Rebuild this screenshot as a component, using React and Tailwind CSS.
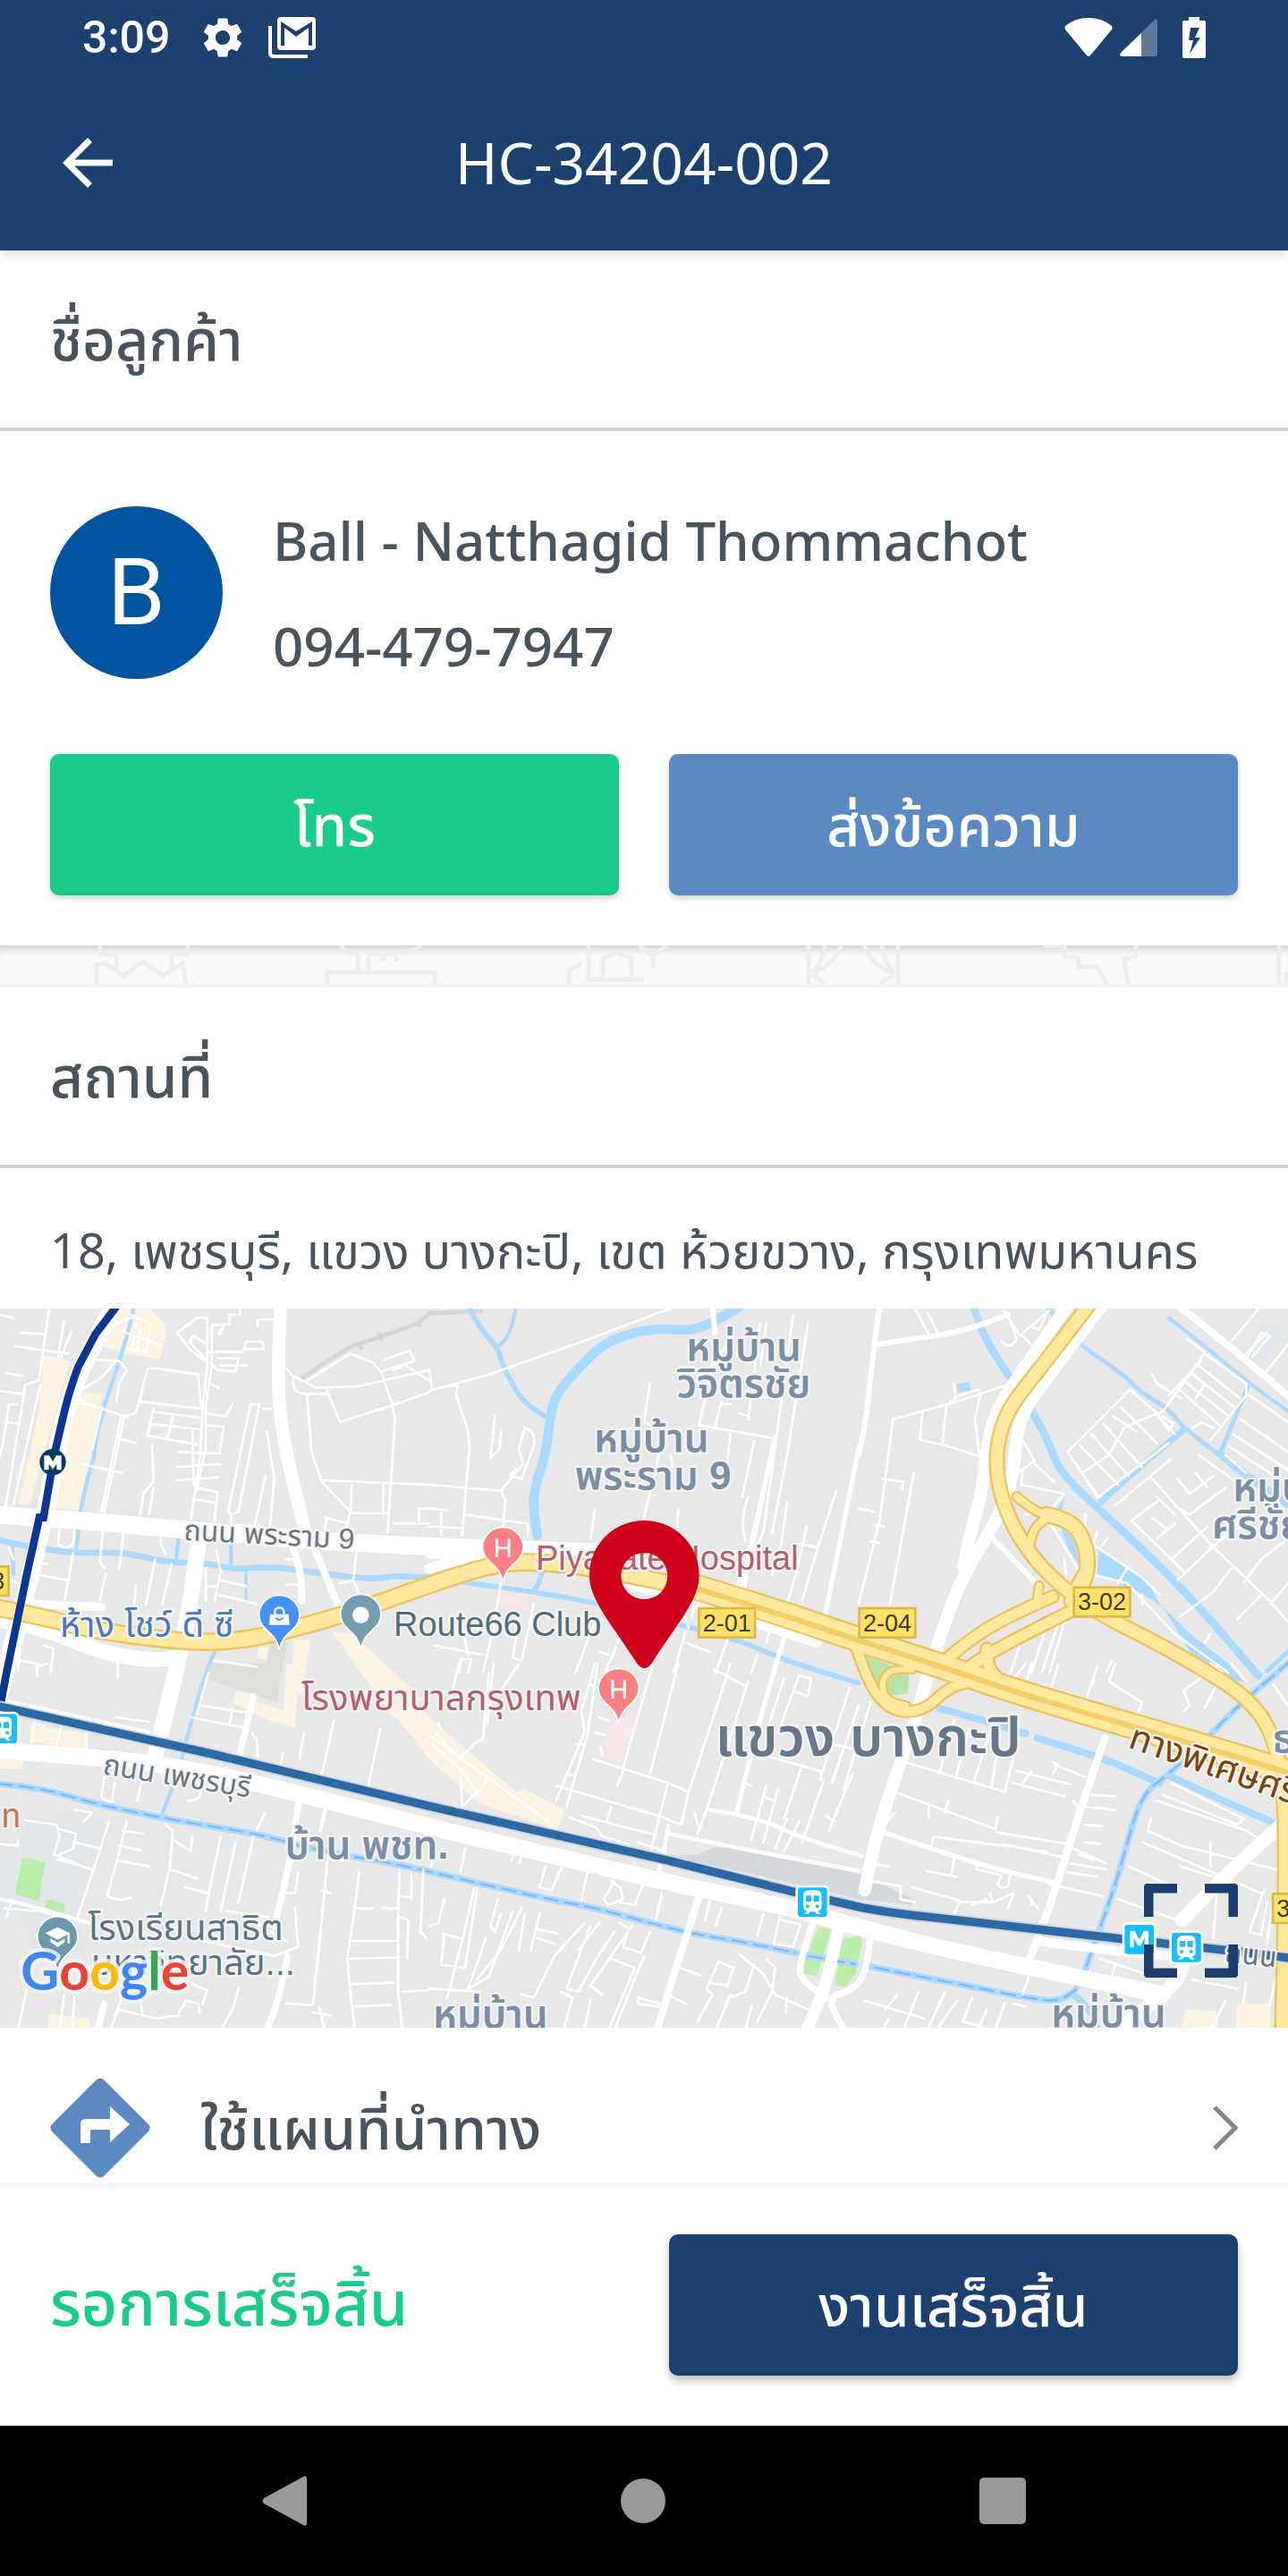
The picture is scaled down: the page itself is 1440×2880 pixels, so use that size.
import React from "react";
import { MdArrowBack, MdSettings } from "react-icons/md";

// Origin of every map tile, in map units (3 units = 1 px on a 1440 wide screen)
const tiles = {
  a: [0, -9],
  b: [1440, -9],
  c: [2880, -9],
  d: [0, 1191],
  e: [1440, 1191],
  f: [2880, 1191],
};

const areas = [
  { tile: "a", fill: "#fcf3e0", d: "M145 165L235 185L170 420L100 665L62 665L130 350ZM400 10H500L555 60V110L535 180L420 160L345 135ZM245 330L335 345L300 520L265 685L178 680L215 480ZM265 285L345 300L335 330L245 315ZM1110 1090L1180 1100L1420 1320L1320 1380ZM985 1120H1040L1015 1300H975ZM865 1145H900L895 1190L865 1180Z" },
  { tile: "d", fill: "#fcf3e0", d: "M100 205L290 235L285 290L100 260ZM0 315L80 325L75 355L0 350ZM790 95H850L840 120L990 170V215L900 190L780 130ZM960 0H1010L990 190L950 160ZM1190 0H1275L1440 180V320ZM165 1175L300 1190V1230H160Z" },
  { tile: "e", fill: "#fcf3e0", d: "M0 180L290 430L320 420L452 490L430 558L170 470L0 320Z" },
  { tile: "f", fill: "#fcf3e0", d: "M1270 1140H1380V1230H1265ZM1100 1160L1200 1165L1210 1230H1080Z" },
  { tile: "b", fill: "#f8e7e9", d: "M240 930L335 955L325 1020L225 1000Z" },
  { tile: "e", fill: "#f8e7e9", d: "M610 190L700 160L650 335L575 315Z" },
  { tile: "d", fill: "#e2e7ea", d: "M90 515L310 490L370 560L300 690L260 830L290 960L120 970L60 820L0 860V600L70 590Z" },
  { tile: "c", fill: "#e2e7ea", d: "M1345 60L1400 50L1430 90L1350 190L1290 180Z" },
  { tile: "d", fill: "#dfddd9", d: "M700 0H945L930 130L840 100L690 50Z" },
  { tile: "a", fill: "#dfddd9", d: "M905 1130H965L945 1230H890Z" },
  { tile: "e", fill: "#d5d8da", d: "M800 645L900 640L960 615L1080 620L1440 705L1520 740L1620 790V810L1440 790L1060 700Z" },
  { tile: "d", fill: "#b9eea8", d: "M75 650L152 665L130 795L50 775ZM155 790L218 805L215 835L150 825Z" },
  { tile: "e", fill: "#b9eea8", d: "M1305 885L1348 892L1300 1048L1255 1040L1262 990ZM1385 925L1440 912L1452 930L1430 1040L1395 1085L1360 1075Z" },
  { tile: "f", fill: "#b9e3a8", d: "M0 -40L80 -5L170 25L165 100L100 108L40 70Z" },
  { tile: "c", fill: "#aadaff", d: "M805 820L960 910L1010 1000L1100 1090L1240 1200L1290 1260L1160 1240L1020 1010L950 965L800 900ZM675 735L720 780L745 880L700 810ZM665 680L690 640L680 690ZM330 262L370 255L376 283L335 290ZM1140 1190L1250 1205L1200 1240Z" },
];

const rivers = [
  { tile: "a", w: 13, pts: ["450,0 430,90 395,200 350,335", "350,345 322,430 318,500 290,590 270,690", "265,740 255,825", "600,770 590,860", "775,790 775,880", "40,800 45,900", "720,1160 685,1240 640,1400 600,1560 545,1700"] },
  { tile: "a", w: 8, pts: ["825,880 825,985"] },
  { tile: "a", w: 20, pts: ["-10,785 120,812 250,830 420,826 560,862 700,862 790,885 900,873 1060,895 1240,918 1330,905 1450,912"] },
  { tile: "b", w: 17, pts: ["120,928 350,958 600,1005", "385,870 372,920 350,958", "800,1060 1030,1115 1180,1185 1440,1265", "130,0 165,70 230,140 250,210 310,320 400,378"] },
  { tile: "b", w: 12, pts: ["292,0 275,90 230,140"] },
  { tile: "b", w: 32, pts: ["1060,-10 940,65 860,84 780,74 670,92 580,130 500,210 420,300 402,400 390,500 350,620 350,690 362,770"] },
  { tile: "c", w: 26, pts: ["385,0 410,80 460,170 515,250", "580,350 640,460 670,550 790,670 860,730 1100,960 1340,1240", "1210,495 1300,570 1440,665"] },
  { tile: "c", w: 15, pts: ["630,0 680,60", "745,130 820,185 900,240 940,285 1040,345 1090,410 1210,500", "1310,260 1260,380 1210,500", "1450,1150 1370,1225"] },
  { tile: "c", w: 20, pts: ["1090,415 960,525 810,660"] },
  { tile: "c", w: 12, pts: ["1040,40 1180,150 1310,260 1450,360"] },
  { tile: "f", w: 24, pts: ["270,150 400,185 560,235", "600,250 820,315 960,380 1010,400", "1040,375 1200,450 1395,535", "720,1110 790,1170 800,1240"] },
];

// Canals that carry a boat line, drawn with a dashed line on top
const canals = [
  { tile: "d", w: 22, pts: ["-10,402 130,415 300,465 480,505 700,545 860,570 1100,635 1300,665 1600,735 1840,790 2000,820 2200,875 2320,905 2500,935 2670,970", "2710,980 2870,1008"] },
  { tile: "f", w: 22, pts: ["1450,-10 1320,100 1240,175 1150,270 1040,370 960,430 920,530 880,680 840,800 760,1025", "730,1090 690,1128 620,1130 520,1112 340,1075 180,1045 35,1015"] },
];

const lanes = [
  { tile: "a", d: "M165 10L130 250L85 265L20 670M70 90L150 95M50 135L230 160M0 30L45 40M215 50L195 170M240 85L205 170M20 225L75 235M0 285L75 295M60 330L30 330L10 460L-5 520M20 390L60 395M135 265L45 665M310 180L400 185L425 215L400 260L390 320M385 190L340 240L260 290M250 310L430 375M260 325L340 345L420 370L455 360L470 310L495 210H530L665 230L675 345M465 320L675 345M405 375L340 690M415 380L350 690M340 350L310 480M400 445L455 460M270 530L410 560M445 40L385 60M440 30L505 60L490 155L430 145M405 85L540 130M455 60L445 140M475 60L460 145" },
  { tile: "a", d: "M695 40H660L595 90L635 145L695 190M650 100L635 120L690 180M650 100L695 130M805 10V30H770V60L710 65V150M695 40V200L680 340L670 520L640 715M710 150V200L690 340L690 480L660 620M750 70L735 95M700 155H815L825 120H880L885 145H820M865 65V45H915M705 190L730 215L790 220L800 175H730M740 200H830M700 260L735 275M515 345L495 435L660 465M515 355L670 375M500 395L675 415M580 370L560 450M645 420L650 600M690 360L755 370L780 330M690 400L750 405L735 495M600 490L740 495M595 540L740 530M590 585L735 575M660 610L730 625L720 720M660 650L720 660M510 465L515 590L480 630L470 700M515 610L500 700M765 690L840 330H870L800 690L780 700ZM880 345H910M895 420L920 580L905 740M890 570L855 735M775 700V735H870" },
  { tile: "a", d: "M960 210L985 240Q975 290 1020 295L1090 295M985 235L1060 275L1200 270L1440 215M1030 250L1175 160L1250 190L1280 225L1315 330L1325 380L1300 760M1030 300L1045 490L1080 590L1175 690L1160 745M1095 280L1140 390L1310 335L1440 290M1080 585L1440 600M1180 600L1175 695H1300M1285 600V700M1290 180L1375 150L1390 185L1280 220M1320 215L1360 200L1440 250M1440 680H1405V725M1320 730H1440M1090 710L1170 730M1095 710L1090 750M1195 830L1185 920L1140 930M1185 920L1220 1000M960 850H1000M960 935H1010" },
  { tile: "a", d: "M200 745L195 800Q220 820 245 800L250 745M345 755L335 860L350 880M415 760L400 880M520 850L490 1000M575 865L545 1000M540 770V800L555 830M245 830L215 1000M355 900L335 985M120 900L225 920M115 865H160M0 905L60 930M30 810L45 850M725 820L740 890L720 990M690 880V990M740 920L825 940M735 970L860 1000M690 940H730M455 940L450 1000M70 1130L60 1220M70 1190L130 1200M150 1140L180 1150L170 1230M720 1190L860 1210" },
  { tile: "b", d: "M830 0L540 110L200 230L0 285M65 270L95 265L90 300L130 420L135 470L110 770M220 370L205 510L235 480L240 420M320 410L300 480L315 530L240 620M320 410Q360 420 350 470L310 580L270 570L290 545M0 600L240 620L255 650L245 770M0 680L60 685M40 685V770M120 700L330 730V775M0 740L110 745M0 215L10 280M945 10L960 150L905 400M1000 120L960 200M1110 60L1070 380M1220 30L1170 400L1120 760L1030 940M1270 60L1200 500L1150 760M1130 60L1110 200M905 400L1160 445L1060 940M980 320L960 400M1070 300L1160 310M980 330H1010M1040 360L1070 370M740 260L720 390L760 410M770 500L720 710M810 500L815 540M1010 430L995 560M1090 450L1050 640M555 685L540 780M835 685L830 760M1070 640Q1040 720 1060 790M1200 660L1180 800L1150 900M1265 740L1235 880L1200 1000M1365 620L1300 820L1250 990M1300 810L1240 800" },
  { tile: "b", d: "M240 930L215 1080L180 1230M160 1080L215 1090M350 1000L310 1190L280 1180L300 1050M20 1140L180 1170M110 1080L130 1170M640 1110L590 1230M555 1060L490 1230M570 1160L600 1170M860 1090L820 1230M860 1130L940 1160M1050 940L1110 1000M1150 1060L1130 1130M890 990L880 1050M1000 1120L960 1230M1100 1170L1080 1230M850 1020L870 1080M100 1230L105 1185H140L130 1230" },
  { tile: "c", d: "M190 10L235 95M230 20L265 90M500 30L530 110Q510 150 480 120M490 20L540 100L640 15M550 100L580 130M580 70L605 80L630 30M650 55L670 30M115 380L300 330L500 265M300 330L325 310L320 260M325 305L405 280M115 380L100 500L70 720L0 1000M215 350L205 450L280 465L405 505M295 330L280 465M410 290L390 380L405 500M0 680L50 690M80 580L150 590L145 615M185 560L105 1000M50 735L85 740M40 790L70 795M550 450L590 520L540 555M590 530L655 590M550 550L545 600L690 630L640 690L650 740L740 890L900 930L1060 1100L1240 1230" },
  { tile: "c", d: "M910 280L700 490L805 640L1040 460M910 280L1000 360L1060 430M855 370L930 420M820 395L950 540M780 430L905 570M740 465L870 600M700 490L800 640M750 560L840 500L890 410L940 385L1020 355L1160 160M880 340L1000 460M1000 360L1040 420L1055 395L1020 370M1100 110L1160 155L1145 190L1040 300M985 230L1000 260L1080 310M1160 160L1300 260V300L1180 450M1140 200L1280 310M1115 225L1260 340M1090 250L1240 370M1070 275L1210 400M1160 265L1130 310M1120 410L1150 390L1190 410M1300 180L1350 90L1380 100L1320 170M1240 130L1350 0M1290 170L1370 90M1360 230L1440 130" },
  { tile: "c", d: "M1310 300L1440 390M1280 380L1440 490M1255 430L1440 550M1240 470L1440 600M1230 500L1300 560M860 670L1045 515M915 720L1010 650M980 575L1190 810L1380 990L1440 1060M1140 500L1280 600M1070 580L1110 630L1190 570M1130 560L1170 610M1060 670L1110 700L1230 610M915 720L1090 890M1000 780L1060 730M1050 850L1170 740M1070 920L1280 720M1180 810L1280 740M1190 960L1250 880M1080 1040L1190 960M1270 1050L1350 970M1380 1000L1440 930M1290 930L1350 850L1440 780M1000 640L1060 700M985 710L1035 750M560 700L620 680M760 700V750M800 760L785 800M835 780L810 810M870 930L900 880M770 790L950 910L1010 970M690 850L695 900M950 970V1000M850 1190L830 1230M690 1060L640 1230M670 1060L615 1230M670 1060H695M625 1090L580 1230M540 1140L510 1230M1160 1130L1180 1100" },
  { tile: "d", d: "M125 0V40M395 0V45M390 180L500 195M120 10L160 0M105 265L115 200L150 210M190 270L205 215M290 290V235M700 30L660 170M640 180L820 215M670 140L835 165M780 150L770 200M860 250L865 310M855 250L845 230M1020 230L1005 320M1120 190L1080 370M1275 220L1235 410M950 300L940 340M890 500L860 560M350 380L340 450L375 465L385 400M475 400L460 460M670 420Q680 460 630 460M365 530L330 640L260 850M425 530L395 650L360 780Q400 800 440 785M410 560L480 570M400 610L470 625M395 660L500 680M555 540L580 560L570 680L540 810M580 590L640 630L645 580M570 690L660 720M620 750L700 770L740 580M700 770L690 830M790 600L740 830M850 580L800 800M80 525L190 540L200 580L180 640L280 680M250 490L310 500L280 530M200 555L255 570L245 620L200 640M255 600L335 620M190 655L310 690M0 605L60 610V590M40 800L20 850M15 820L130 830L300 870" },
  { tile: "d", d: "M560 1040L695 1095L680 1140M400 1160L520 1190L600 1180M405 1130L370 1230M470 1130L480 1180M600 1170L625 1130L665 1140L670 1170M800 1090L780 1160L740 1230M90 1090L60 1230M250 1120L240 1230M215 1110L200 1230M860 870L960 930M760 830L900 850M1000 700L990 770H960M990 820L1000 950L920 980L680 930M1100 640L1080 850L1050 1140M1080 760L1110 770M960 1140L1050 1145M1050 1170L1110 1180M1070 1150L1090 1230M1205 700L1190 820L1165 990L1175 1100L1190 1230M1190 820L1250 820M1280 820H1340M1170 930H1335M1165 990L1340 985M1170 1075L1320 1070M1190 1150L1310 1145M1340 690L1335 850V1100L1350 1230M1340 780L1380 785M1340 850L1370 860L1365 990M1380 700V790M1350 1100L1440 1095M1420 690L1410 900L1430 920" },
  { tile: "e", d: "M200 30L180 250L150 270L100 320M30 200L40 220M100 0L80 80M215 0L195 200M300 0L240 90M555 0L510 160L520 230L425 460M565 0L530 240L460 480M490 270H520M460 370L490 375M430 410L800 520M540 70L570 85M570 180L600 190M555 230L590 240M550 320L800 400L740 640M580 310L575 280M655 350L630 410M750 0L650 350M835 0L740 370M800 400L870 430L845 540L790 520M610 480L595 530M470 515L560 550L580 580L670 605M510 510L700 560L760 575M700 600L780 625M955 20L995 40L1060 75M1010 0L985 80L870 430M1070 60L930 490L900 570M890 500L900 540M1240 40L1280 50L1270 110L1230 95M1240 40L1170 230M1190 50L1130 230M1410 80L1310 390M1350 270L1440 290M1130 310L1310 360L1320 400L1250 600M1250 340L1190 520M1420 370L1340 560M1130 410L1080 590M1130 450L1160 460M1170 420L1120 600M1200 520L1160 620M1240 530L1190 630M1330 510L1360 530M1060 400L1080 410M20 230L100 320M10 270L110 360L160 430L110 480L105 380M0 240L400 530M200 380L160 440M800 540L790 640M770 680L780 640" },
  { tile: "e", d: "M150 755L120 890L60 1120M45 905L100 920M50 910L40 1010L120 1020L160 760M0 880L30 870L50 790M230 790L205 880L220 900L240 840M190 920L130 1090L200 1050L280 830M310 820L240 960L160 1060M320 840L300 960M370 840L340 960M360 890L430 905M360 920L420 940M0 1090L170 1100M520 870L420 980L350 1120L310 1110M540 880L460 1090L500 1100L560 990L620 900M570 870L500 960M680 880L540 1080L580 1110M640 870L670 890L650 950L710 970L740 900M610 990L690 1020L600 1230M720 980L620 1230M440 1100L480 1120L450 1230M700 1120L770 1140V1150L700 1140ZM800 1110L860 1140M530 700L510 790M390 680L370 750L410 760L445 680M620 730L585 790L600 810L650 790L640 750L610 730M715 740L690 810L640 800M780 770L760 860M120 620L105 700M20 600L5 680M840 1020L910 1045M970 1000L930 1090L950 1110L900 1200M970 1000L1020 1020L1000 1080L940 1070M1040 975L1120 1040L1160 1110L1270 1160M1090 1010L1060 1100L1010 1120M1130 990L1160 1020L1150 1100L1100 1200M1200 1120L1195 1170M1175 850L1155 940L1220 950L1245 875L1180 860M1120 840L1100 910M980 820L960 880M940 800L925 860M290 620L275 660M320 620L300 670M1080 1150L1060 1230M1010 1110L960 1230M390 1170L370 1230M540 1130L520 1230" },
  { tile: "f", d: "M40 130L-50 420M0 140L-90 400M320 190L270 370M370 220L325 385M440 230L385 400M475 240L445 415M155 330L490 430L530 270M530 360L710 405M515 400L690 445M580 360L550 400M650 330L670 340L650 370M660 340L760 380M120 430L460 555M235 480V515M300 460L290 500M465 515L460 555M460 565L700 605M485 605L690 650M250 580L630 630M245 610L250 580M70 560L120 500M40 670L100 680M320 655L310 710M225 695L330 715M395 680V690L480 710L465 740Q480 760 500 745L510 705M40 730L140 745V790L190 800M180 750L340 795L320 840M430 790L380 810M440 770L450 800M500 820L520 770L450 800L330 800M570 780L600 820M580 800V810M640 740L820 780M710 670L830 690M720 620L830 670M740 640L790 660M700 700L800 715M760 600L810 605M760 540L815 545M760 480L860 490M780 440L860 445M720 460L740 490" },
  { tile: "f", d: "M860 0L840 60L950 130L930 190M775 80L790 60M800 10L760 130M520 50L560 0M670 0L640 100M620 70L600 100M710 100L700 130M580 0L560 70M1440 140L1390 70M1200 10L1090 90L1110 140L1090 160M1180 0L1220 30L1160 150M1250 0L1300 60M1020 440L1270 540L1290 520L1110 430L1050 400M1000 460L1300 560L1360 600M980 520L970 560L1080 610L1440 700M955 600L1350 770M905 680L1080 760M1080 680L1240 730M870 790L1070 860M1180 600V680M1250 260L1360 330M1360 760L1310 900L1350 910L1370 800M1200 780L1190 920M1390 780L1370 940M810 990L960 1040M860 1010L850 1050L1000 1080M570 1050L550 1110M20 1130L220 1190M130 1110L90 1160M200 1100L150 1230M290 1100L230 1230M330 1130L260 1230M380 1120L350 1200L420 1220M430 1160L400 1230M490 1140L460 1220M520 1140L560 1150M100 1190L80 1230M1120 1060L1270 1090M1230 1130L1180 1230M1300 1070L1290 1140M1410 1010L1380 1140" },
];

const streets = [
  { tile: "a", w: 60, pts: ["400,-30 290,170 225,330 190,500 150,700 90,960 -10,1330"] },
  { tile: "a", w: 60, pts: ["-20,700 300,722 700,758 1100,790 1440,808 2000,826"] },
  { tile: "a", w: 44, pts: ["940,0 933,200 935,330 960,500 1020,740"] },
  { tile: "a", w: 24, pts: ["1020,720 1080,880 1160,1060", "980,800 1010,890 1012,990"] },
  { tile: "a", w: 54, pts: ["665,790 640,1000 590,1230 520,1510"] },
  { tile: "a", w: 50, pts: ["-20,1050 150,1080 300,1150 480,1190 600,1180"] },
  { tile: "a", w: 28, pts: ["60,995 200,1005 340,1010"] },
  { tile: "b", w: 34, pts: ["0,830 200,850", "0,880 110,850 250,830", "540,890 760,960 1000,1030 1300,1130"] },
  { tile: "b", w: 16, pts: ["950,0 960,90", "1160,440 1045,960", "1440,480 1325,1050", "1200,1080 1160,1210 1100,1420 1030,1700"] },
  { tile: "b", w: 24, pts: ["870,900 1100,985 1300,1050"] },
  { tile: "c", w: 18, pts: ["70,0 50,140 25,380 0,500", "60,130 200,108 350,85 500,30", "440,770 500,830 620,960"] },
  { tile: "c", w: 24, pts: ["1060,-10 1250,140 1450,310"] },
  { tile: "c", w: 42, pts: ["830,-20 640,230 560,340 530,430 515,600 440,760 370,870 310,1000 240,1210 170,1450 70,1730 20,1960"] },
  { tile: "c", w: 42, pts: ["700,0 560,200 460,350 430,470 415,620 380,740 350,880"] },
  { tile: "d", w: 56, pts: ["-20,290 300,312 600,345 900,410 1440,548 1840,640 2240,735 2640,815 2880,885 3180,960 3580,1045 3900,1110"] },
  { tile: "d", w: 22, pts: ["1000,470 985,600 950,760 920,880", "965,980 935,1130 890,1240", "350,1140 325,1240", "850,110 800,320"] },
  { tile: "d", w: 12, pts: ["0,790 60,800 300,870", "1090,490 1075,560", "0,120 500,230"] },
  { tile: "e", w: 24, pts: ["905,780 870,890 830,1010 760,1240"] },
  { tile: "e", w: 14, pts: ["940,490 1100,515 1250,585 1450,645", "800,570 1040,620 1440,695", "800,560 770,700"] },
  { tile: "e", w: 40, pts: ["1375,870 1340,1060 1260,1240"] },
  { tile: "e", w: 22, pts: ["1290,860 1240,1000 1245,1060 1330,1120", "1480,900 1470,1030 1420,1095 1330,1120 1400,1240"] },
  { tile: "f", w: 26, pts: ["825,250 740,500 640,820 570,1000"] },
  { tile: "f", w: 16, pts: ["70,560 380,670 660,735"] },
  { tile: "f", w: 46, pts: ["1450,510 1240,700 1085,860", "1095,960 1090,1040 1000,1130 900,1200 860,1250"] },
  { tile: "f", w: 30, pts: ["600,930 900,970 1100,985"] },
];

const highways = [
  { tile: "a", w: 48, pts: ["-20,1010 150,1045 320,1090 620,1128 800,1125 960,1090 1200,1022 1440,935 1640,870 1780,855 2000,880 2340,950 2600,1020 2880,1115"] },
  { tile: "b", w: 76, pts: ["900,945 1150,1020 1440,1120 1740,1215 1940,1285 2240,1375 2640,1490 2900,1570"] },
  { tile: "c", w: 40, pts: ["800,-40 640,170 520,320 480,400 460,500 470,620 530,770 640,910 800,1030 1000,1130 1150,1215 1300,1310 1390,1430 1430,1640 1430,2000 1420,2440"] },
  { tile: "c", w: 24, pts: ["530,640 590,690 640,700", "575,800 580,750 640,705", "605,940 600,985"] },
  { tile: "c", w: 44, pts: ["630,700 700,715 750,770 770,850 760,920 715,990"] },
  { tile: "c", w: 34, pts: ["650,975 480,1050 360,1130 290,1190", "720,1020 560,1100 430,1170 350,1225", "760,890 720,960", "430,1150 425,1210 500,1280"] },
  { tile: "f", w: 30, pts: ["-10,-60 30,60 90,140 150,165 230,150 300,80 380,60"] },
  { tile: "f", w: 18, pts: ["180,20 110,15 75,60 90,120 160,140"] },
];

const greyRail = "M1010 245L1090 190L1180 135L1270 105L1400 60L1440 25L1560 20L1620 18M1200 125L1215 145M1270 90L1280 115M1400 50L1410 70";
const metroLine = "M392 0L320 95L262 205Q230 290 210 380L182 500L146 710H132L90 900L20 1240L0 1345";
const airportLine = "M-10 142L720 305L1440 478L2240 660L2700 775L2900 820Q3000 838 3100 848L3780 925L4120 962L4330 988";

const labels = [
  { tile: "a", x: 615, y: 785, size: 96, color: "#6a757d", text: "ถนน พระราม 9", rotate: 3 },
  { tile: "a", x: 200, y: 1110, size: 120, color: "#4a78bb", text: "ห้าง โชว์ ดี ซี" },
  { tile: "a", x: 1320, y: 1108, size: 114, color: "#566b78", text: "Route66 Club" },
  { tile: "b", x: 357, y: 884, size: 114, color: "#b4606b", text: "Piyavate Hospital" },
  { tile: "b", x: 1055, y: 183, size: 132, color: "#7b8ea8", text: "หมู่บ้าน", anchor: "middle", weight: 600 },
  { tile: "b", x: 1055, y: 305, size: 132, color: "#7b8ea8", text: "วิจิตรชัย", anchor: "middle", weight: 600 },
  { tile: "b", x: 745, y: 490, size: 132, color: "#7b8ea8", text: "หมู่บ้าน", anchor: "middle", weight: 600 },
  { tile: "b", x: 750, y: 615, size: 132, color: "#7b8ea8", text: "พระราม 9", anchor: "middle", weight: 600 },
  { tile: "c", x: 1255, y: 655, size: 132, color: "#7b8ea8", text: "หมู่บ้าน", weight: 600 },
  { tile: "c", x: 1185, y: 780, size: 132, color: "#7b8ea8", text: "ศรีชัย", weight: 600 },
  { tile: "d", x: 342, y: 370, size: 96, color: "#6a757d", text: "ถนน เพชรบุรี", rotate: 9 },
  { tile: "d", x: 5, y: 550, size: 114, color: "#d0704e", text: "n" },
  { tile: "d", x: 295, y: 928, size: 120, color: "#5c7582", text: "โรงเรียนสาธิต" },
  { tile: "d", x: 305, y: 1045, size: 120, color: "#5c7582", text: "มหาวิทยาลัย..." },
  { tile: "d", x: 1010, y: 157, size: 120, color: "#b4606b", text: "โรงพยาบาลกรุงเทพ" },
  { tile: "d", x: 1230, y: 655, size: 132, color: "#7b8ea8", text: "บ้าน พชท.", anchor: "middle", weight: 600 },
  { tile: "d", x: 1645, y: 1222, size: 132, color: "#7b8ea8", text: "หมู่บ้าน", anchor: "middle", weight: 600 },
  { tile: "e", x: 1472, y: 308, size: 180, color: "#66788a", text: "แขวง บางกะปิ", anchor: "middle", weight: 600 },
  { tile: "f", x: 838, y: 1218, size: 132, color: "#7b8ea8", text: "หมู่บ้าน", anchor: "middle", weight: 600 },
  { tile: "f", x: 900, y: 280, size: 120, color: "#7d4206", text: "ทางพิเศษศรีรัช", rotate: 19 },
  { tile: "f", x: 1225, y: 1000, size: 96, color: "#6a757d", text: "ถนน", rotate: 6 },
  { tile: "f", x: 1388, y: 297, size: 132, color: "#7b8ea8", text: "ธ", weight: 600 },
];

const exits = [
  { tile: "a", x: -163, y: 870, text: "2-03" },
  { tile: "b", x: 900, y: 1010, text: "2-01" },
  { tile: "c", x: -2, y: 1010, text: "2-04" },
  { tile: "c", x: 718, y: 940, text: "3-02" },
  { tile: "f", x: 1385, y: 768, text: "3-01" },
];

// Rounds a "x,y x,y" list off with curves through the middle of each segment
const smooth = (list) => {
  const pts = list.split(" ").map((p) => p.split(",").map(Number));
  let d = `M${pts[0][0]} ${pts[0][1]}`;
  for (let i = 1; i < pts.length - 1; i++) {
    const [x, y] = pts[i];
    const [nx, ny] = pts[i + 1];
    d += `Q${x} ${y} ${(x + nx) / 2} ${(y + ny) / 2}`;
  }
  const last = pts[pts.length - 1];
  return `${d}L${last[0]} ${last[1]}`;
};

const Tile = ({ name, children }) => (
  <g transform={`translate(${tiles[name].join(" ")})`}>{children}</g>
);

const Lines = ({ items, color, grow = 0, cap = "round", dash }) =>
  items.map((item, i) => (
    <Tile key={i} name={item.tile}>
      <path
        d={item.pts.map(smooth).join("")}
        fill="none"
        stroke={color}
        strokeWidth={dash ? 7 : item.w + grow}
        strokeDasharray={dash}
        strokeLinecap={cap}
        strokeLinejoin="round"
      />
    </Tile>
  ));

const PoiPin = ({ tile, x, y, color, children }) => (
  <Tile name={tile}>
    <g transform={`translate(${x} ${y})`}>
      <path
        d="M0 112C-8 80 -20 68 -42 48C-60 32 -68 16 -68 -2A68 68 0 0 1 68 -2C68 16 60 32 42 48C20 68 8 80 0 112Z"
        fill={color}
        stroke="#fff"
        strokeWidth="5"
      />
      {children}
    </g>
  </Tile>
);

const TrainStop = ({ tile, x, y }) => (
  <Tile name={tile}>
    <g transform={`translate(${x} ${y})`}>
      <rect x="-53" y="-53" width="106" height="106" rx="14" fill="#15bfff" stroke="#fff" strokeWidth="8" />
      <path
        d="M-14 -40H14Q30 -38 31 -22V16Q30 28 18 30L28 40H14L8 32H-8L-14 40H-28L-18 30Q-30 28 -31 16V-22Q-30 -38 -14 -40Z"
        fill="#fff"
      />
      <path d="M-22 -22H-4V-2H-22ZM4 -22H22V-2H4Z" fill="#15bfff" />
      <circle cx="-16" cy="14" r="6" fill="#15bfff" />
      <circle cx="16" cy="14" r="6" fill="#15bfff" />
    </g>
  </Tile>
);

const LocationMap = () => (
  <svg
    viewBox="0 0 4320 2412"
    preserveAspectRatio="xMidYMid slice"
    className="block h-[804px] w-full bg-[#e8e8e8] font-['Liberation_Sans','Noto_Sans_Thai',sans-serif]"
    role="img"
    aria-label="แผนที่"
  >
    {areas.map((a, i) => (
      <Tile key={i} name={a.tile}>
        <path d={a.d} fill={a.fill} />
      </Tile>
    ))}
    <Tile name="a">
      <path d={greyRail} fill="none" stroke="#d3d7da" strokeWidth="14" />
    </Tile>
    <Lines items={rivers} color="#aadaff" />
    <Lines items={canals} color="#aadaff" />
    <Lines items={canals} color="#86b9f0" cap="butt" dash="52 20" />
    {lanes.map((l, i) => (
      <Tile key={i} name={l.tile}>
        <path d={l.d} fill="none" stroke="#fff" strokeWidth="8" strokeLinejoin="round" strokeLinecap="round" />
      </Tile>
    ))}
    <Lines items={streets} color="#fff" />
    <Lines items={highways} color="#efc35c" grow={14} />
    <Lines items={highways} color="#ffe99f" />
    <Tile name="b">
      <path
        d={smooth("900,950 1150,1025 1440,1122 1740,1217 1940,1287 2240,1377 2640,1492 2900,1572")}
        fill="none"
        stroke="#f4cd68"
        strokeWidth="18"
      />
    </Tile>
    {/* Rail lines */}
    <Tile name="a">
      <path d={metroLine} fill="none" stroke="#0d3592" strokeWidth="26" />
    </Tile>
    <Tile name="d">
      <path d={airportLine} fill="none" stroke="#c9d6e2" strokeWidth="38" />
      <path d={airportLine} fill="none" stroke="#2d69a2" strokeWidth="28" />
    </Tile>

    {exits.map((s, i) => (
      <Tile key={i} name={s.tile}>
        <rect x={s.x + 4} y={s.y + 4} width="188" height="98" fill="#ffe168" stroke="#dfb745" strokeWidth="8" />
        <text x={s.x + 98} y={s.y + 81} textAnchor="middle" fontSize="81" fill="#3f3a2a">
          {s.text}
        </text>
      </Tile>
    ))}

    {labels.map((l, i) => (
      <Tile key={i} name={l.tile}>
        <text
          x={l.x}
          y={l.y}
          fontSize={l.size}
          fontWeight={l.weight}
          textAnchor={l.anchor}
          fill={l.color}
          stroke="#f3f4f5"
          strokeWidth="14"
          strokeLinejoin="round"
          paintOrder="stroke"
          transform={l.rotate ? `rotate(${l.rotate} ${l.x} ${l.y})` : undefined}
        >
          {l.text}
        </text>
      </Tile>
    ))}

    <PoiPin tile="a" x={937} y={1040} color="#4690fa">
      <path d="M-31 -6H31L34 30H-34Z" fill="#fff" />
      <path d="M-15 -6V-14Q-14 -28 0 -28Q14 -28 15 -14V-6" fill="none" stroke="#fff" strokeWidth="7" />
      <path d="M-12 6Q0 20 12 6" fill="none" stroke="#4690fa" strokeWidth="6" />
    </PoiPin>
    <PoiPin tile="a" x={1210} y={1037} color="#769cb0">
      <circle r="28" fill="#fff" />
    </PoiPin>
    <PoiPin tile="b" x={247} y={812} color="#fb8083">
      <path d="M-20 -31V31M20 -31V31M-20 0H20" stroke="#fff" strokeWidth="9" />
    </PoiPin>
    <PoiPin tile="e" x={635} y={86} color="#fb8083">
      <path d="M-20 -31V31M20 -31V31M-20 0H20" stroke="#fff" strokeWidth="9" />
    </PoiPin>
    <PoiPin tile="d" x={193} y={918} color="#6d97ac">
      <path d="M-42 -14L0 -34L42 -14L0 8ZM-24 4V16L0 32L24 16V4L0 18Z" fill="#fff" />
      <path d="M37 -12V20" stroke="#fff" strokeWidth="7" />
    </PoiPin>

    <Tile name="a">
      <circle cx="177" cy="524" r="44" fill="#073a63" />
      <path d="M148 550V502H165L177 522L189 502H206V550H190V530L177 548L164 530V550Z" fill="#fff" />
    </Tile>
    <TrainStop tile="d" x={8} y={218} />
    <TrainStop tile="e" x={1285} y={800} />
    <Tile name="f">
      <rect x="888" y="872" width="106" height="106" rx="14" fill="#15bfff" stroke="#fff" strokeWidth="8" />
      <path d="M910 952V896H926L941 926L956 896H972V952H959V918L946 946H936L923 918V952Z" fill="#fff" />
    </Tile>
    <TrainStop tile="f" x={1099} y={952} />

    <Tile name="d">
      <text
        x="70"
        y="1096"
        fontSize="177"
        stroke="#f3f4f5"
        strokeWidth="26"
        strokeOpacity="0.8"
        paintOrder="stroke"
        strokeLinejoin="round"
        className="font-['Lato',sans-serif] font-bold"
      >
        <tspan fill="#4285f4">G</tspan>
        <tspan fill="#ea4335">o</tspan>
        <tspan fill="#fbbc05">o</tspan>
        <tspan fill="#4285f4">g</tspan>
        <tspan fill="#34a853">l</tspan>
        <tspan fill="#ea4335">e</tspan>
      </text>
    </Tile>

    {/* Job location */}
    <Tile name="b">
      <path
        fillRule="evenodd"
        d="M721 720C823 720 905 800 905 905C905 990 820 1080 745 1200Q721 1230 697 1200C622 1080 537 990 537 905C537 800 619 720 721 720ZM721 828A78 78 0 1 0 721 984A78 78 0 1 0 721 828Z"
        fill="#d0021b"
      />
    </Tile>
  </svg>
);

const StatusBar = () => (
  <div className="flex h-[84px] items-center justify-between px-[92px] text-white">
    <div className="flex items-center">
      <span className="font-['Roboto',sans-serif] text-[50px] leading-none font-medium">3:09</span>
      <MdSettings className="ml-8 size-[54px]" />
      <svg viewBox="0 0 54 46" className="ml-6 h-[46px] w-[54px]" aria-hidden="true">
        <path d="M2 10V40Q2 44 6 44H44" fill="none" stroke="currentColor" strokeWidth="4" />
        <path
          fillRule="evenodd"
          d="M14 0H49Q53 0 53 4V33Q53 37 49 37H14Q10 37 10 33V4Q10 0 14 0ZM14 5V32H18V12L31 22L45 12V32H49V5L31 16Z"
          fill="currentColor"
        />
      </svg>
    </div>
    <div className="flex items-center">
      <svg viewBox="0 0 54 44" className="h-[44px] w-[54px]" aria-hidden="true">
        <path d="M27 0Q42 0 53 9Q54 11 53 13L29 42Q27 44 25 42L1 13Q0 11 1 9Q12 0 27 0Z" fill="currentColor" />
      </svg>
      <svg viewBox="0 0 42 42" className="ml-2 h-[42px] w-[42px]" aria-hidden="true">
        <path d="M39 1Q42 -1 42 3V39Q42 42 39 42H3Q-1 42 1 38Z" fill="currentColor" opacity="0.3" />
        <path d="M24 16V42H3Q-1 42 1 38Z" fill="currentColor" />
      </svg>
      <svg viewBox="0 0 26 46" className="ml-7 h-[46px] w-[26px]" aria-hidden="true">
        <path
          fillRule="evenodd"
          d="M7 0H19V4H24Q26 4 26 6V44Q26 46 24 46H2Q0 46 0 44V6Q0 4 2 4H7ZM9 12L7 26H12L8 41L20 23H14L19 12Z"
          fill="currentColor"
        />
      </svg>
    </div>
  </div>
);

const SectionTitle = ({ children }) => (
  <h2 className="flex h-[202px] items-center border-b-4 border-[#cccccc] px-14 text-[64px] leading-none font-medium">
    {children}
  </h2>
);

const ActionButton = ({ className, children }) => (
  <button
    type="button"
    className={`h-[158px] flex-1 rounded-[10px] text-[64px] leading-none font-medium text-white ${className}`}
  >
    {children}
  </button>
);

const App = () => {
  return (
    <div className="flex min-h-screen flex-col bg-white font-['Noto_Sans','Noto_Sans_Thai',sans-serif] text-[#4a545e]">
      <header className="relative bg-[#1d416f] text-white shadow-[0_4px_12px_rgba(0,0,0,0.15)]">
        <StatusBar />
        <div className="grid h-[196px] grid-cols-[1fr_auto_1fr] items-center px-14">
          <button type="button" aria-label="ย้อนกลับ" className="justify-self-start">
            <MdArrowBack className="size-[84px]" />
          </button>
          <h1 className="text-[64px] leading-none">HC-34204-002</h1>
        </div>
      </header>

      <main className="flex-1">
        {/* Customer */}
        <section>
          <SectionTitle>ชื่อลูกค้า</SectionTitle>
          <div className="px-14 pt-[84px] pb-14">
            <div className="flex items-center gap-14">
              <div className="flex size-[193px] items-center justify-center rounded-full bg-[#01559e] font-['Roboto',sans-serif] text-[104px] leading-none text-white">
                B
              </div>
              <div className="flex flex-col gap-12 text-[60px] leading-[70px] font-medium">
                <p>Ball - Natthagid Thommachot</p>
                <p>094-479-7947</p>
              </div>
            </div>
            <div className="mt-[84px] flex gap-14">
              <ActionButton className="bg-[#1acc89] shadow-[0_3px_6px_rgba(0,0,0,0.2)]">โทร</ActionButton>
              <ActionButton className="bg-[#5b8ac3] shadow-[0_3px_6px_rgba(0,0,0,0.2)]">ส่งข้อความ</ActionButton>
            </div>
          </div>
        </section>

        {/* Patterned gap between the cards */}
        <div className="h-[47px] border-b-4 border-[#f1f2f8] bg-[#fafafa] shadow-[inset_0_10px_8px_-6px_rgba(0,0,0,0.18)]">
          <svg
            viewBox="0 0 1440 43"
            preserveAspectRatio="xMidYMid slice"
            className="h-[43px] w-full"
            fill="none"
            stroke="#eeeeee"
            strokeWidth="5"
            aria-hidden="true"
          >
            <path d="M112 0V10H130V30M210 0V10H192V28M108 43V22L118 20L138 34L160 18L182 34L204 20L208 43" />
            <path d="M382 0Q384 9 400 9V28M470 0Q466 9 412 10V28M366 43V30H486V43M424 15H432M440 15H446" />
            <path d="M636 43V28L650 20M658 0V38H720M674 38V14L690 8L706 14V38M714 0L730 12L746 0M730 12V26" />
            <path d="M904 0V43M940 0Q932 22 908 32M922 0Q920 20 908 30M1004 0V43M966 0Q974 22 1000 32M986 0Q988 20 1000 30M908 32L922 43M1000 32L984 43" />
            <path d="M1166 0H1190V12L1206 14V24L1226 24L1238 43M1270 0V12L1256 16L1262 43" />
            <path d="M1430 0V43M1438 30V43" />
          </svg>
        </div>

        {/* Location */}
        <section>
          <SectionTitle>สถานที่</SectionTitle>
          <p className="flex h-[157px] items-center px-14 pt-6 text-[54px] leading-none whitespace-nowrap">
            18, เพชรบุรี, แขวง บางกะปิ, เขต ห้วยขวาง, กรุงเทพมหานคร
          </p>
          <div className="relative overflow-hidden">
            <LocationMap />
            <button type="button" aria-label="ขยายแผนที่" className="absolute right-14 bottom-14">
              <svg viewBox="0 0 105 105" className="block size-[105px]" fill="none" stroke="#1b3e6e" strokeWidth="11" strokeLinejoin="round">
                <path d="M5 37V5H37M68 5H100V37M100 68V100H68M37 100H5V68" />
              </svg>
            </button>
          </div>
          <a href="#navigate" className="flex items-center border-b-4 border-[#f1f3f8] px-14 pt-14 pb-[6px]">
            <svg viewBox="0 0 112 112" className="size-[112px]" aria-hidden="true">
              <path d="M51 3Q56 -2 61 3L109 51Q114 56 109 61L61 109Q56 114 51 109L3 61Q-2 56 3 51Z" fill="#5b8ac3" />
              <path d="M34 73V52Q34 46 40 46H67V32L89 52L67 72V58H45V73Z" fill="#fff" />
            </svg>
            <span className="ml-14 flex-1 text-[64px] leading-[70px] font-medium">ใช้แผนที่นำทาง</span>
            <svg viewBox="0 0 28 50" className="h-[50px] w-7" fill="none" stroke="#858585" strokeWidth="5" aria-hidden="true">
              <path d="M2 2L25 25L2 48" />
            </svg>
          </a>
        </section>
      </main>

      <footer className="flex items-center gap-14 px-14 pt-[52px] pb-14">
        <p className="flex-1 pb-2 text-[70px] leading-none font-medium text-[#1acc89]">รอการเสร็จสิ้น</p>
        <ActionButton className="bg-[#1d416f] shadow-[0_6px_10px_rgba(0,0,0,0.25)]">งานเสร็จสิ้น</ActionButton>
      </footer>

      <nav className="flex h-[168px] items-center justify-around bg-black px-[118px] text-[#999999]">
        <button type="button" aria-label="Back">
          <svg viewBox="0 0 50 56" className="h-14 w-[50px]">
            <path d="M46 1Q50 -1 50 3V53Q50 57 46 55L2 31Q-1 28 2 25Z" fill="currentColor" />
          </svg>
        </button>
        <button type="button" aria-label="Home" className="size-[50px] rounded-full bg-current" />
        <button type="button" aria-label="Recent apps" className="size-[52px] rounded-[5px] bg-current" />
      </nav>
    </div>
  );
};

export default App;
